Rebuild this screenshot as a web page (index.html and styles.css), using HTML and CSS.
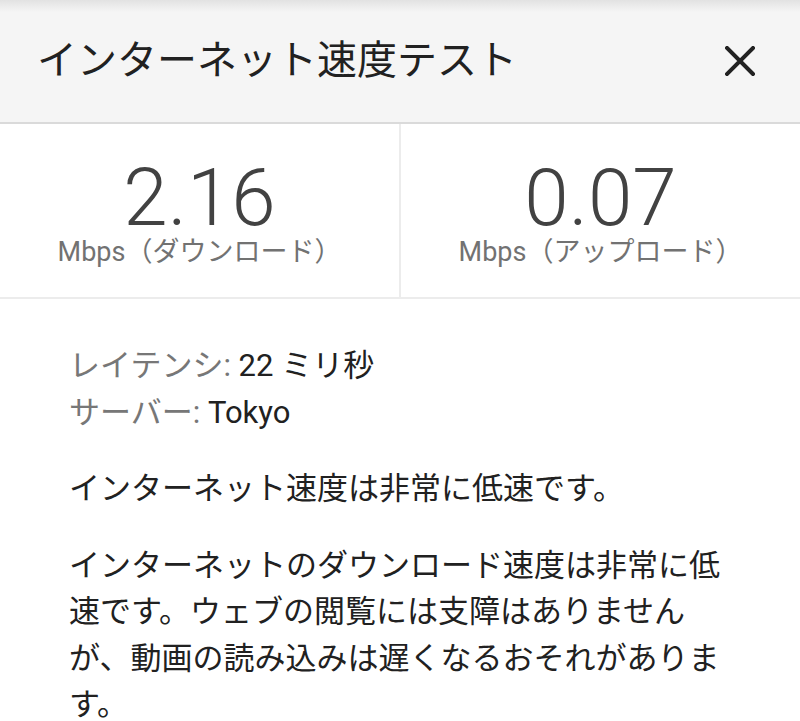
FILE: index.html
```html
<!DOCTYPE html>
<html lang="ja">
<head>
<meta charset="utf-8">
<title>インターネット速度テスト</title>
<link rel="stylesheet" href="styles.css">
</head>
<body>
<header class="header">
  <h1 class="title">インターネット速度テスト</h1>
  <button class="close" aria-label="閉じる">
    <svg width="30" height="30" viewBox="0 0 30 30"><path d="M2 2 L28 28 M28 2 L2 28" stroke="#222" stroke-width="4" stroke-linecap="square" fill="none"/></svg>
  </button>
</header>
<section class="stats">
  <div class="stat stat-left">
    <div class="num">2.16</div>
    <div class="unit">Mbps（ダウンロード）</div>
  </div>
  <div class="stat">
    <div class="num">0.07</div>
    <div class="unit">Mbps（アップロード）</div>
  </div>
</section>
<main class="body">
  <div class="meta">
    <div class="row"><span class="label">レイテンシ:</span> <span class="value">22 ミリ秒</span></div>
    <div class="row"><span class="label">サーバー:</span> <span class="value">Tokyo</span></div>
  </div>
  <p class="para">インターネット速度は非常に低速です。</p>
  <p class="para">インターネットのダウンロード速度は非常に低速です。ウェブの閲覧には支障はありませんが、動画の読み込みは遅くなるおそれがあります。</p>
</main>
</body>
</html>
```
FILE: styles.css
```css
html, body {
  margin: 0;
  padding: 0;
  background: #fff;
}
body {
  font-family: Roboto, "Noto Sans CJK JP", sans-serif;
  color: #212121;
  width: 800px;
}
.header {
  height: 122px;
  border-bottom: 2px solid #dadada;
  background: linear-gradient(#e2e2e2 0px, #f5f5f5 12px, #f5f5f5 100%);
  display: flex;
  align-items: center;
  justify-content: space-between;
  padding: 0 45px 0 37px;
}
.title {
  margin: 0;
  font-size: 40px;
  font-weight: 400;
  color: #212121;
  line-height: 1;
}
.close {
  border: none;
  background: none;
  padding: 0;
  width: 30px;
  height: 30px;
  display: flex;
}
.stats {
  display: flex;
  height: 173px;
  border-bottom: 2px solid #ececec;
}
.stat {
  flex: 1;
  display: flex;
  flex-direction: column;
  align-items: center;
  padding-top: 36px;
}
.stat-left {
  border-right: 2px solid #ececec;
}
.num {
  font-family: Roboto, sans-serif;
  font-weight: 300;
  font-size: 80px;
  line-height: 76px;
  color: #424242;
}
.unit {
  font-size: 27px;
  line-height: 32px;
  color: #727272;
}
.body {
  padding: 44px 70px 0 69px;
  font-size: 31px;
  line-height: 46.5px;
}
.label {
  color: #777;
}
.value {
  color: #212121;
}
.para {
  margin: 30px 0 0 0;
}
```
